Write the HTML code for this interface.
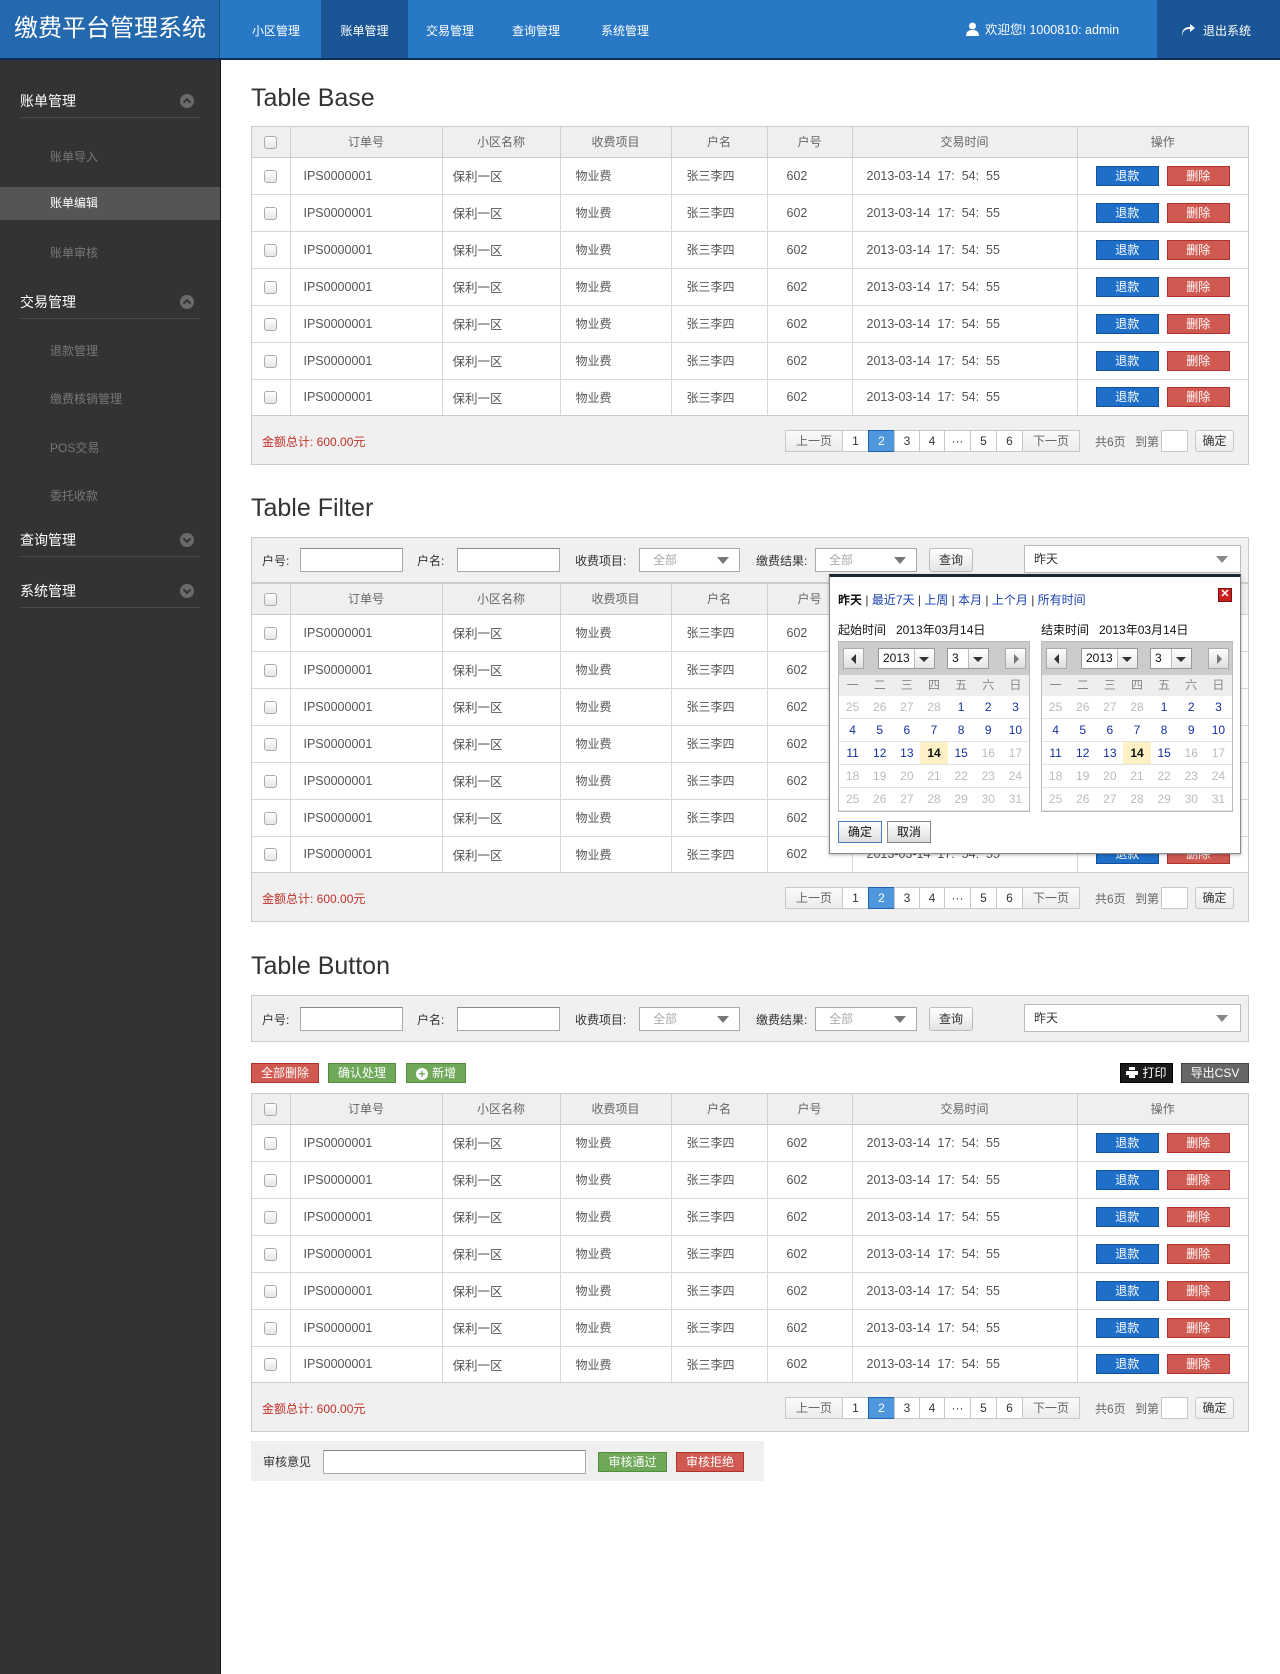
<!DOCTYPE html>
<html><head><meta charset="utf-8">
<style>
*{box-sizing:border-box;margin:0;padding:0}
body{width:1280px;height:1674px;position:relative;background:#fff;font-family:"Liberation Sans","Noto Sans CJK SC",sans-serif;font-size:12px;color:#555;overflow:hidden}
.hdr{position:absolute;left:0;top:0;width:1280px;height:60px;background:#2878c6;border-bottom:2px solid #0e2e5a}
.logo{position:absolute;left:0;top:0;width:220px;height:58px;background:#2468ad;color:#fff;font-size:24px;line-height:58px;padding-left:14px;border-right:1px solid #1a4f86}
.nav{position:absolute;top:0;height:58px;line-height:62px;color:#fff;font-size:12px;text-align:center}
.nav.on{background:#1a5595}
.user{position:absolute;left:966px;top:0;line-height:60px;color:#fff;font-size:12.5px}
.logout{position:absolute;left:1157px;top:0;width:123px;height:58px;background:#1a5595;color:#fff;line-height:62px;font-size:12px;padding-left:24px}
.side{position:absolute;left:0;top:60px;width:221px;height:1614px;background:#333;border-right:1px solid #111}
.g{position:absolute;left:20px;width:180px;color:#fff;font-size:14px;border-bottom:1px solid #4a4a4a;height:34px;line-height:34px}
.g i{position:absolute;right:6px;top:10px;width:14px;height:14px;border-radius:50%;background:#6a6a6a}
.g i:after{content:"";position:absolute;left:4px;top:5px;width:4px;height:4px;border-left:2px solid #333;border-top:2px solid #333;transform:rotate(45deg)}
.g i.d:after{top:3px;transform:rotate(225deg)}
.s{position:absolute;left:50px;color:#777;font-size:12px}
.sa{position:absolute;left:0;top:187px;width:220px;height:33px;background:#555;color:#fff;line-height:33px;padding-left:50px}
.title{position:absolute;left:251px;font-size:25px;color:#333;font-weight:normal}
.box{position:absolute;left:251px;width:998px;border:1px solid #ccc;background:#f0f0f0}
table{border-collapse:collapse;table-layout:fixed;width:996px;background:#fff}
th{height:30px;background:#efefef;font-weight:normal;color:#666;border-right:1px solid #d0d0d0;border-bottom:1px solid #ccc;font-size:12px}
td{height:37px;border-right:1px solid #d8d8d8;border-bottom:1px solid #d8d8d8;font-size:12.5px;color:#555}
th:last-child,td:last-child{border-right:none}
tr:last-child td{border-bottom:1px solid #ccc;height:36px}
td:nth-child(1),th:nth-child(1){text-align:center}
td:nth-child(2){padding-left:13px}td:nth-child(3){padding-left:10px}td:nth-child(4){padding-left:15px;font-size:12px}td:nth-child(5){padding-left:15px;font-size:12px}td:nth-child(6){padding-left:19px}td:nth-child(7){padding-left:14px}
td:nth-child(8){text-align:center}
.cb{display:inline-block;width:13px;height:13px;border:1px solid #aaa;border-radius:3px;background:linear-gradient(#fff,#e6e6e6);vertical-align:middle}
.b{display:inline-block;width:63px;height:20px;line-height:18px;color:#fff;font-size:12px;text-align:center;vertical-align:middle}
.bl{background:#1f6fc8;border:1px solid #15509a}
.rd{background:#d05a52;border:1px solid #b0322c;margin-left:8px}
.ft{height:48px;position:relative}
.tot{position:absolute;left:10px;top:17px;color:#c0302a;font-size:12px}
.pg{position:absolute;top:14px;height:22px;border:1px solid #c8c8c8;background:#fff;text-align:center;line-height:20px;font-size:12px;color:#333}
.pg.gr{background:linear-gradient(#fafafa,#ececec);color:#666}
.pg.on{background:#4f97dc;color:#fff;border-color:#1f62b0}
.pt{position:absolute;top:17px;color:#666;font-size:12px}
.fb{position:absolute;left:251px;width:998px;border:1px solid #ccc;background:#f0f0f0}
.fl{position:absolute;font-size:12px;color:#333}
.in{position:absolute;height:24px;border:1px solid #aaa;border-top-color:#888;background:#fff}
.sel{position:absolute;height:24px;border:1px solid #aaa;background:#fff;color:#aaa;padding-left:13px;line-height:22px;font-size:12px}
.sel:after{content:"";position:absolute;right:10px;top:8px;border:6px solid transparent;border-top:7px solid #777;border-bottom:none}
.q{position:absolute;height:24px;width:44px;border:1px solid #bbb;border-radius:3px;background:linear-gradient(#fff,#e4e4e4);text-align:center;line-height:22px;font-size:12px;color:#333}
.ds{position:absolute;height:28px;border:1px solid #bbb;background:#fff;color:#333;padding-left:9px;line-height:26px;font-size:12px}
.ds:after{content:"";position:absolute;right:12px;top:10px;border:6px solid transparent;border-top:7px solid #888;border-bottom:none}
.tb{position:absolute;height:20px;line-height:18px;color:#fff;font-size:12px;text-align:center}
.gn{background:#6fa858;border:1px solid #4f8e3a}
.pop{position:absolute;left:829px;top:574px;width:412px;height:280px;background:#fff;border:1px solid #888;border-top:3px solid #1a2633;box-shadow:0 1px 3px rgba(0,0,0,.3)}
.pop .lk{position:absolute;left:8px;top:14px;font-size:12px;color:#1a3fb0}
.pop .lk b{color:#111;font-weight:bold}
.pop .x{position:absolute;right:8px;top:11px;width:14px;height:14px;background:#c82020;border:1px solid #801010;color:#fff;font-size:11px;line-height:11px;text-align:center;font-weight:bold}
.cl{position:absolute;font-size:12px;color:#111}
.cal{position:absolute;top:64px;width:192px;height:171px;border:1px solid #bbb;background:#fff}
.cal .nv{height:33px;background:#ccc;position:relative}
.cal .nv .a{position:absolute;top:6px;width:21px;height:21px;border:1px solid #aaa;background:linear-gradient(#fff,#ddd)}
.cal .nv .a:after{content:"";position:absolute;top:5px;left:7px;border:5px solid transparent;border-right:5px solid #333;border-left:none}
.cal .nv .a.r:after{left:8px;border-right:none;border-left:5px solid #777}
.cal .nv .y{position:absolute;top:6px;height:21px;border:1px solid #999;background:#fff;font-size:12px;color:#111;line-height:19px;padding-left:4px}
.cal .nv .y:before{content:"";position:absolute;right:0;top:0;width:19px;height:19px;border-left:1px solid #bbb;background:linear-gradient(#fff,#e6e6e6)}
.cal .nv .y:after{content:"";position:absolute;right:5px;top:8px;border:5px solid transparent;border-top:5px solid #333;border-bottom:none}
.cal .wk{height:21px;background:#eee;display:flex}
.cal .wk span,.cal .r span{flex:1;text-align:center;font-size:12px}
.cal .wk span{color:#888;line-height:21px}
.cal .r{display:flex;height:23px;line-height:22px;border-bottom:1px solid #e4e4e4}
.cal .r span{color:#1430a0}
.cal .r span.o{color:#bbb}
.cal .r span.t{background:#fdf0c4;color:#111;font-weight:bold}
.cb2{position:absolute;top:244px;width:44px;height:22px;border:1px solid #888;background:linear-gradient(#fff,#ddd);font-size:12px;line-height:20px;text-align:center;color:#111}
</style></head><body>

<div class="hdr">
<div class="logo">缴费平台管理系统</div>
<div class="nav" style="left:236px;width:80px">小区管理</div>
<div class="nav on" style="left:321px;width:87px">账单管理</div>
<div class="nav" style="left:408px;width:84px">交易管理</div>
<div class="nav" style="left:494px;width:84px">查询管理</div>
<div class="nav" style="left:580px;width:90px">系统管理</div>
<div class="user"><svg width="13" height="14" viewBox="0 0 13 14" style="vertical-align:-2px;margin-right:6px"><circle cx="6.5" cy="4" r="3.5" fill="#fff"/><path d="M0 14 Q0 8 6.5 8 Q13 8 13 14Z" fill="#fff"/></svg>欢迎您! 1000810: admin</div>
<div class="logout"><svg width="14" height="13" viewBox="0 0 14 13" style="vertical-align:-2px;margin-right:8px"><path d="M1 13 Q1 5 9 5 L9 8 L14 4 L9 0 L9 3 Q0 3 1 13Z" fill="#fff"/></svg>退出系统</div>
</div>

<div class="side">
<div class="g" style="top:24px">账单管理<i></i></div>
<div class="s" style="top:88px">账单导入</div>
<div class="sa" style="top:127px">账单编辑</div>
<div class="s" style="top:184px">账单审核</div>
<div class="g" style="top:225px">交易管理<i></i></div>
<div class="s" style="top:282px">退款管理</div>
<div class="s" style="top:330px">缴费核销管理</div>
<div class="s" style="top:379px">POS交易</div>
<div class="s" style="top:427px">委托收款</div>
<div class="g" style="top:463px">查询管理<i class="d"></i></div>
<div class="g" style="top:514px">系统管理<i class="d"></i></div>
</div>

<!-- TABLE BASE -->
<div class="title" style="top:84px">Table Base</div>
<div class="box" style="top:126px">
<table><colgroup><col style="width:38px"><col style="width:152px"><col style="width:118px"><col style="width:111px"><col style="width:96px"><col style="width:85px"><col style="width:225px"><col style="width:171px"></colgroup>
<tr><th><span class="cb"></span></th><th>订单号</th><th>小区名称</th><th>收费项目</th><th>户名</th><th>户号</th><th>交易时间</th><th>操作</th></tr>
<tr><td><span class="cb"></span></td><td>IPS0000001</td><td>保利一区</td><td>物业费</td><td>张三李四</td><td>602</td><td>2013-03-14 &nbsp;17: &nbsp;54: &nbsp;55</td><td><span class="b bl">退款</span><span class="b rd">删除</span></td></tr>
<tr><td><span class="cb"></span></td><td>IPS0000001</td><td>保利一区</td><td>物业费</td><td>张三李四</td><td>602</td><td>2013-03-14 &nbsp;17: &nbsp;54: &nbsp;55</td><td><span class="b bl">退款</span><span class="b rd">删除</span></td></tr>
<tr><td><span class="cb"></span></td><td>IPS0000001</td><td>保利一区</td><td>物业费</td><td>张三李四</td><td>602</td><td>2013-03-14 &nbsp;17: &nbsp;54: &nbsp;55</td><td><span class="b bl">退款</span><span class="b rd">删除</span></td></tr>
<tr><td><span class="cb"></span></td><td>IPS0000001</td><td>保利一区</td><td>物业费</td><td>张三李四</td><td>602</td><td>2013-03-14 &nbsp;17: &nbsp;54: &nbsp;55</td><td><span class="b bl">退款</span><span class="b rd">删除</span></td></tr>
<tr><td><span class="cb"></span></td><td>IPS0000001</td><td>保利一区</td><td>物业费</td><td>张三李四</td><td>602</td><td>2013-03-14 &nbsp;17: &nbsp;54: &nbsp;55</td><td><span class="b bl">退款</span><span class="b rd">删除</span></td></tr>
<tr><td><span class="cb"></span></td><td>IPS0000001</td><td>保利一区</td><td>物业费</td><td>张三李四</td><td>602</td><td>2013-03-14 &nbsp;17: &nbsp;54: &nbsp;55</td><td><span class="b bl">退款</span><span class="b rd">删除</span></td></tr>
<tr><td><span class="cb"></span></td><td>IPS0000001</td><td>保利一区</td><td>物业费</td><td>张三李四</td><td>602</td><td>2013-03-14 &nbsp;17: &nbsp;54: &nbsp;55</td><td><span class="b bl">退款</span><span class="b rd">删除</span></td></tr>
</table>
<div class="ft"><span class="tot">金额总计: 600.00元</span>
<div class="pg gr" style="left:533px;width:58px">上一页</div><div class="pg" style="left:590px;width:27px">1</div><div class="pg on" style="left:616px;width:27px">2</div><div class="pg" style="left:642px;width:26px">3</div><div class="pg" style="left:667px;width:26px">4</div><div class="pg" style="left:692px;width:27px">···</div><div class="pg" style="left:718px;width:27px">5</div><div class="pg" style="left:744px;width:27px">6</div><div class="pg gr" style="left:770px;width:58px">下一页</div>
<span class="pt" style="left:843px">共6页</span><span class="pt" style="left:883px">到第</span><div class="pg" style="left:909px;width:27px"></div><div class="pg gr" style="left:943px;width:39px;border-radius:3px;color:#333">确定</div>
</div></div>

<!-- TABLE FILTER -->
<div class="title" style="top:494px">Table Filter</div>
<div class="fb" style="top:537px;height:46px">
<span class="fl" style="left:10px;top:14px">户号:</span><div class="in" style="left:48px;top:10px;width:103px"></div>
<span class="fl" style="left:165px;top:14px">户名:</span><div class="in" style="left:205px;top:10px;width:103px"></div>
<span class="fl" style="left:323px;top:14px">收费项目:</span><div class="sel" style="left:387px;top:10px;width:101px">全部</div>
<span class="fl" style="left:504px;top:14px">缴费结果:</span><div class="sel" style="left:563px;top:10px;width:102px">全部</div>
<div class="q" style="left:677px;top:10px">查询</div>
<div class="ds" style="left:772px;top:7px;width:217px">昨天</div>
</div>
<div class="box" style="top:583px">
<table><colgroup><col style="width:38px"><col style="width:152px"><col style="width:118px"><col style="width:111px"><col style="width:96px"><col style="width:85px"><col style="width:225px"><col style="width:171px"></colgroup>
<tr><th><span class="cb"></span></th><th>订单号</th><th>小区名称</th><th>收费项目</th><th>户名</th><th>户号</th><th>交易时间</th><th>操作</th></tr>
<tr><td><span class="cb"></span></td><td>IPS0000001</td><td>保利一区</td><td>物业费</td><td>张三李四</td><td>602</td><td>2013-03-14 &nbsp;17: &nbsp;54: &nbsp;55</td><td><span class="b bl">退款</span><span class="b rd">删除</span></td></tr>
<tr><td><span class="cb"></span></td><td>IPS0000001</td><td>保利一区</td><td>物业费</td><td>张三李四</td><td>602</td><td>2013-03-14 &nbsp;17: &nbsp;54: &nbsp;55</td><td><span class="b bl">退款</span><span class="b rd">删除</span></td></tr>
<tr><td><span class="cb"></span></td><td>IPS0000001</td><td>保利一区</td><td>物业费</td><td>张三李四</td><td>602</td><td>2013-03-14 &nbsp;17: &nbsp;54: &nbsp;55</td><td><span class="b bl">退款</span><span class="b rd">删除</span></td></tr>
<tr><td><span class="cb"></span></td><td>IPS0000001</td><td>保利一区</td><td>物业费</td><td>张三李四</td><td>602</td><td>2013-03-14 &nbsp;17: &nbsp;54: &nbsp;55</td><td><span class="b bl">退款</span><span class="b rd">删除</span></td></tr>
<tr><td><span class="cb"></span></td><td>IPS0000001</td><td>保利一区</td><td>物业费</td><td>张三李四</td><td>602</td><td>2013-03-14 &nbsp;17: &nbsp;54: &nbsp;55</td><td><span class="b bl">退款</span><span class="b rd">删除</span></td></tr>
<tr><td><span class="cb"></span></td><td>IPS0000001</td><td>保利一区</td><td>物业费</td><td>张三李四</td><td>602</td><td>2013-03-14 &nbsp;17: &nbsp;54: &nbsp;55</td><td><span class="b bl">退款</span><span class="b rd">删除</span></td></tr>
<tr><td><span class="cb"></span></td><td>IPS0000001</td><td>保利一区</td><td>物业费</td><td>张三李四</td><td>602</td><td>2013-03-14 &nbsp;17: &nbsp;54: &nbsp;55</td><td><span class="b bl">退款</span><span class="b rd">删除</span></td></tr>
</table>
<div class="ft"><span class="tot">金额总计: 600.00元</span>
<div class="pg gr" style="left:533px;width:58px">上一页</div><div class="pg" style="left:590px;width:27px">1</div><div class="pg on" style="left:616px;width:27px">2</div><div class="pg" style="left:642px;width:26px">3</div><div class="pg" style="left:667px;width:26px">4</div><div class="pg" style="left:692px;width:27px">···</div><div class="pg" style="left:718px;width:27px">5</div><div class="pg" style="left:744px;width:27px">6</div><div class="pg gr" style="left:770px;width:58px">下一页</div>
<span class="pt" style="left:843px">共6页</span><span class="pt" style="left:883px">到第</span><div class="pg" style="left:909px;width:27px"></div><div class="pg gr" style="left:943px;width:39px;border-radius:3px;color:#333">确定</div>
</div></div>

<div class="pop">
<div class="lk"><b>昨天</b> <span style="color:#333">|</span> 最近7天 <span style="color:#333">|</span> 上周 <span style="color:#333">|</span> 本月 <span style="color:#333">|</span> 上个月 <span style="color:#333">|</span> 所有时间</div>
<div class="x">✕</div>
<div class="cl" style="left:8px;top:44px">起始时间 &nbsp; 2013年03月14日</div>
<div class="cl" style="left:211px;top:44px">结束时间 &nbsp; 2013年03月14日</div>
<div class="cal" style="left:8px">
 <div class="nv"><div class="a" style="left:4px"></div><div class="y" style="left:39px;width:57px">2013</div><div class="y" style="left:108px;width:42px">3</div><div class="a r" style="left:166px"></div></div>
 <div class="wk"><span>一</span><span>二</span><span>三</span><span>四</span><span>五</span><span>六</span><span>日</span></div>
 <div class="r"><span class="o">25</span><span class="o">26</span><span class="o">27</span><span class="o">28</span><span>1</span><span>2</span><span>3</span></div>
 <div class="r"><span>4</span><span>5</span><span>6</span><span>7</span><span>8</span><span>9</span><span>10</span></div>
 <div class="r"><span>11</span><span>12</span><span>13</span><span class="t">14</span><span>15</span><span class="o">16</span><span class="o">17</span></div>
 <div class="r"><span class="o">18</span><span class="o">19</span><span class="o">20</span><span class="o">21</span><span class="o">22</span><span class="o">23</span><span class="o">24</span></div>
 <div class="r"><span class="o">25</span><span class="o">26</span><span class="o">27</span><span class="o">28</span><span class="o">29</span><span class="o">30</span><span class="o">31</span></div>
</div>
<div class="cal" style="left:211px">
 <div class="nv"><div class="a" style="left:4px"></div><div class="y" style="left:39px;width:57px">2013</div><div class="y" style="left:108px;width:42px">3</div><div class="a r" style="left:166px"></div></div>
 <div class="wk"><span>一</span><span>二</span><span>三</span><span>四</span><span>五</span><span>六</span><span>日</span></div>
 <div class="r"><span class="o">25</span><span class="o">26</span><span class="o">27</span><span class="o">28</span><span>1</span><span>2</span><span>3</span></div>
 <div class="r"><span>4</span><span>5</span><span>6</span><span>7</span><span>8</span><span>9</span><span>10</span></div>
 <div class="r"><span>11</span><span>12</span><span>13</span><span class="t">14</span><span>15</span><span class="o">16</span><span class="o">17</span></div>
 <div class="r"><span class="o">18</span><span class="o">19</span><span class="o">20</span><span class="o">21</span><span class="o">22</span><span class="o">23</span><span class="o">24</span></div>
 <div class="r"><span class="o">25</span><span class="o">26</span><span class="o">27</span><span class="o">28</span><span class="o">29</span><span class="o">30</span><span class="o">31</span></div>
</div>
<div class="cb2" style="left:8px;border-color:#4a7fbf">确定</div>
<div class="cb2" style="left:57px">取消</div>
</div>

<!-- TABLE BUTTON -->
<div class="title" style="top:952px">Table Button</div>
<div class="fb" style="top:995px;height:47px">
<span class="fl" style="left:10px;top:15px">户号:</span><div class="in" style="left:48px;top:11px;width:103px"></div>
<span class="fl" style="left:165px;top:15px">户名:</span><div class="in" style="left:205px;top:11px;width:103px"></div>
<span class="fl" style="left:323px;top:15px">收费项目:</span><div class="sel" style="left:387px;top:11px;width:101px">全部</div>
<span class="fl" style="left:504px;top:15px">缴费结果:</span><div class="sel" style="left:563px;top:11px;width:102px">全部</div>
<div class="q" style="left:677px;top:11px">查询</div>
<div class="ds" style="left:772px;top:8px;width:217px">昨天</div>
</div>
<div class="tb rd" style="left:251px;top:1063px;width:68px;margin:0">全部删除</div>
<div class="tb gn" style="left:328px;top:1063px;width:68px">确认处理</div>
<div class="tb gn" style="left:406px;top:1063px;width:60px"><span style="display:inline-block;width:12px;height:12px;border-radius:50%;background:#fff;color:#6fa858;font-weight:bold;line-height:12px;font-size:12px;vertical-align:-1px;margin-right:4px">+</span>新增</div>
<div class="tb" style="left:1120px;top:1063px;width:53px;background:#1a1a1a;border:1px solid #000"><svg width="12" height="11" viewBox="0 0 12 11" style="vertical-align:-1px;margin-right:4px"><rect x="3" y="0" width="6" height="3" fill="#fff"/><rect x="0" y="4" width="12" height="4" fill="#fff"/><rect x="3" y="8" width="6" height="3" fill="#fff"/></svg>打印</div>
<div class="tb" style="left:1181px;top:1063px;width:68px;background:#666;border:1px solid #444">导出CSV</div>
<div class="box" style="top:1093px">
<table><colgroup><col style="width:38px"><col style="width:152px"><col style="width:118px"><col style="width:111px"><col style="width:96px"><col style="width:85px"><col style="width:225px"><col style="width:171px"></colgroup>
<tr><th><span class="cb"></span></th><th>订单号</th><th>小区名称</th><th>收费项目</th><th>户名</th><th>户号</th><th>交易时间</th><th>操作</th></tr>
<tr><td><span class="cb"></span></td><td>IPS0000001</td><td>保利一区</td><td>物业费</td><td>张三李四</td><td>602</td><td>2013-03-14 &nbsp;17: &nbsp;54: &nbsp;55</td><td><span class="b bl">退款</span><span class="b rd">删除</span></td></tr>
<tr><td><span class="cb"></span></td><td>IPS0000001</td><td>保利一区</td><td>物业费</td><td>张三李四</td><td>602</td><td>2013-03-14 &nbsp;17: &nbsp;54: &nbsp;55</td><td><span class="b bl">退款</span><span class="b rd">删除</span></td></tr>
<tr><td><span class="cb"></span></td><td>IPS0000001</td><td>保利一区</td><td>物业费</td><td>张三李四</td><td>602</td><td>2013-03-14 &nbsp;17: &nbsp;54: &nbsp;55</td><td><span class="b bl">退款</span><span class="b rd">删除</span></td></tr>
<tr><td><span class="cb"></span></td><td>IPS0000001</td><td>保利一区</td><td>物业费</td><td>张三李四</td><td>602</td><td>2013-03-14 &nbsp;17: &nbsp;54: &nbsp;55</td><td><span class="b bl">退款</span><span class="b rd">删除</span></td></tr>
<tr><td><span class="cb"></span></td><td>IPS0000001</td><td>保利一区</td><td>物业费</td><td>张三李四</td><td>602</td><td>2013-03-14 &nbsp;17: &nbsp;54: &nbsp;55</td><td><span class="b bl">退款</span><span class="b rd">删除</span></td></tr>
<tr><td><span class="cb"></span></td><td>IPS0000001</td><td>保利一区</td><td>物业费</td><td>张三李四</td><td>602</td><td>2013-03-14 &nbsp;17: &nbsp;54: &nbsp;55</td><td><span class="b bl">退款</span><span class="b rd">删除</span></td></tr>
<tr><td><span class="cb"></span></td><td>IPS0000001</td><td>保利一区</td><td>物业费</td><td>张三李四</td><td>602</td><td>2013-03-14 &nbsp;17: &nbsp;54: &nbsp;55</td><td><span class="b bl">退款</span><span class="b rd">删除</span></td></tr>
</table>
<div class="ft"><span class="tot">金额总计: 600.00元</span>
<div class="pg gr" style="left:533px;width:58px">上一页</div><div class="pg" style="left:590px;width:27px">1</div><div class="pg on" style="left:616px;width:27px">2</div><div class="pg" style="left:642px;width:26px">3</div><div class="pg" style="left:667px;width:26px">4</div><div class="pg" style="left:692px;width:27px">···</div><div class="pg" style="left:718px;width:27px">5</div><div class="pg" style="left:744px;width:27px">6</div><div class="pg gr" style="left:770px;width:58px">下一页</div>
<span class="pt" style="left:843px">共6页</span><span class="pt" style="left:883px">到第</span><div class="pg" style="left:909px;width:27px"></div><div class="pg gr" style="left:943px;width:39px;border-radius:3px;color:#333">确定</div>
</div></div>

<div style="position:absolute;left:251px;top:1441px;width:513px;height:40px;background:#efefef">
<span class="fl" style="left:12px;top:12px">审核意见</span>
<div class="in" style="left:72px;top:9px;width:263px"></div>
<div class="tb gn" style="left:347px;top:11px;width:69px">审核通过</div>
<div class="tb rd" style="left:425px;top:11px;width:68px;margin:0">审核拒绝</div>
</div>
</body></html>
